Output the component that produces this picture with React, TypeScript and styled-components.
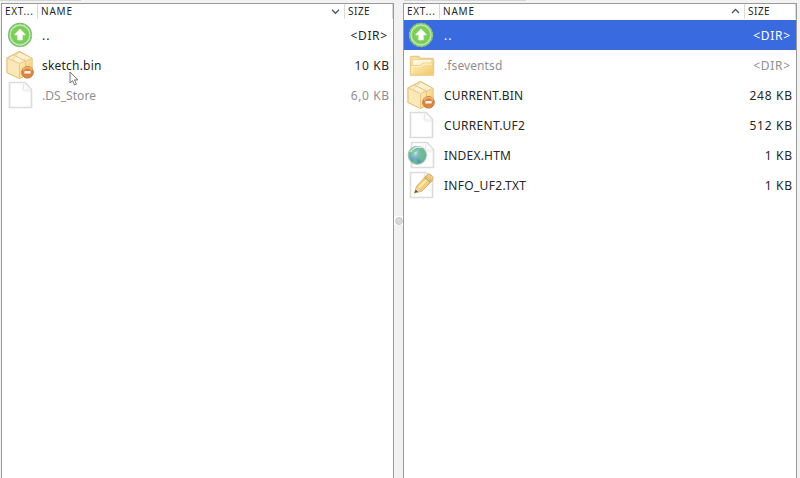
import React from "react";
import styled, { createGlobalStyle } from "styled-components";

const Global = createGlobalStyle`
  * { box-sizing: border-box; }
  body { margin: 0; background: #f2f2f2; overflow: hidden; }
`;

const Window = styled.div`
  position: relative;
  display: grid;
  grid-template-columns: 393px 9px 394px;
  width: 800px;
  height: 478px;
  padding: 3px 0 0 1px;
  background: #f2f2f2;
  font-family: "Noto Sans", "Open Sans", sans-serif;
  color: #262626;
`;

const Pane = styled.section`
  background: #fff;
  border: 1px solid #999;
  border-bottom: 0;
  height: 475px;
`;

const Header = styled.header`
  display: flex;
  height: 16px;
  font-size: 10px;
  line-height: 15px;
`;

const Column = styled.div<{ $width?: number; $pad: number }>`
  display: flex;
  justify-content: space-between;
  align-items: flex-start;
  ${(p) => (p.$width ? `flex: 0 0 ${p.$width}px;` : "flex: 1;")}
  height: 15px;
  padding-left: ${(p) => p.$pad}px;
  border-right: 1px solid #d9d9d9;
  white-space: nowrap;
`;

const Label = styled.span<{ $spacing: number }>`
  letter-spacing: ${(p) => p.$spacing}px;
`;

const SortArrow = styled.svg`
  margin: 4px 4px 0 0;
`;

const Row = styled.div<{ $tone: Tone; $inset: number }>`
  display: flex;
  align-items: center;
  height: 30px;
  padding: 0 4px 0 ${(p) => p.$inset}px;
  font-size: 12px;
  line-height: 32px;
  white-space: pre;
  background: ${(p) => (p.$tone === "selected" ? "#396ae0" : "transparent")};
  color: ${(p) => (p.$tone === "selected" ? "#fff" : p.$tone === "hidden" ? "#8f8f8f" : "#262626")};
`;

const IconCell = styled.div`
  width: 30px;
  height: 30px;
  flex: none;
`;

const Name = styled.span<{ $spacing: number; $indent: number }>`
  flex: 1;
  height: 30px;
  margin-left: ${(p) => p.$indent}px;
  letter-spacing: ${(p) => p.$spacing}px;
`;

const Size = styled.span<{ $spacing: number; $end: number }>`
  height: 30px;
  letter-spacing: ${(p) => p.$spacing}px;
  margin-right: ${(p) => p.$end - p.$spacing}px;
`;

const Splitter = styled.div`
  display: flex;
  align-items: center;
  justify-content: center;
  height: 435px;
`;

const Grip = styled.div`
  width: 9px;
  height: 9px;
  background: #fff;
  display: grid;
  place-items: center;
  &::after {
    content: "";
    width: 6px;
    height: 6px;
    border-radius: 50%;
    background: #d9d9d9;
    border: 1px solid #c9c9c9;
  }
`;

const TopEdge = styled.div<{ $left: number; $width: number }>`
  position: absolute;
  top: 0;
  left: ${(p) => p.$left}px;
  width: ${(p) => p.$width}px;
  height: 1px;
  background: #d6d6d6;
`;

const Cursor = styled.svg`
  position: absolute;
  left: 69px;
  top: 71px;
`;

type Tone = "normal" | "hidden" | "selected";
type Kind = "up" | "box" | "page" | "folder" | "web" | "text";
interface Entry {
  kind: Kind;
  name: string;
  nameSpacing: number;
  size: string;
  sizeSpacing: number;
  tone?: Tone;
}

function PageShape() {
  return (
    <>
      <path d="M4.5 2.5h15.5l6.5 7v18h-22z" fill="#fff" stroke="#dcdcdc" strokeWidth="1.7" strokeLinejoin="round" />
      <path d="M18.5 3.5v6.5H26" fill="#fcfcfc" stroke="#e6e6e6" strokeWidth="1.1" />
      <path d="M15.5 4l3 7 7 1" fill="none" stroke="#f2f2f2" />
    </>
  );
}

function FileIcon({ kind }: { kind: Kind }) {
  return (
    <svg width="30" height="30" viewBox="0 0 30 30">
      <defs>
        <radialGradient id="green"><stop offset="0" stopColor="#8edb66" /><stop offset="1" stopColor="#74cb54" /></radialGradient>
        <linearGradient id="gold" x2="1" y2="1"><stop stopColor="#fdf0c0" /><stop offset="1" stopColor="#f3c765" /></linearGradient>
        <radialGradient id="globe" cx=".4" cy=".35"><stop stopColor="#c4e5ee" /><stop offset=".5" stopColor="#7fb6cf" /><stop offset="1" stopColor="#5a99b0" /></radialGradient>
      </defs>
      {kind === "up" && (
        <>
          <circle cx="15" cy="15" r="11.4" fill="#c9ecb8" stroke="#74b968" strokeWidth="1.5" />
          <circle cx="15" cy="15" r="11.6" fill="none" stroke="#9bcf8e" strokeWidth="1" strokeDasharray="2 2.1" />
          <circle cx="15" cy="15" r="9" fill="url(#green)" stroke="#8dd271" />
          <path d="M15 9l5.5 5.8h-3.2V20h-4.6v-5.2H9.5z" fill="#fff" stroke="#fff" strokeWidth=".5" strokeLinejoin="round" />
        </>
      )}
      {kind === "box" && (
        <>
          <path d="M14.5 1.5l12.5 7v13.5l-12.5 6.5-12.5-6V8z" fill="#f8dea0" stroke="#e4bd77" strokeWidth="1.3" strokeLinejoin="round" />
          <path d="M2.7 8.2l11.8 5.5V28L2.7 22.2z" fill="#fbe8b8" />
          <path d="M14.5 13.7l12.2-5.2v13.3L14.5 28z" fill="url(#gold)" />
          <path d="M14.5 2.5l12 6-12 5-12-5z" fill="#fbf1d3" />
          <path d="M2.7 8.2l11.8 5.5 12.2-5.2M14.5 14v13M8.5 5l12 6v5" fill="none" stroke="#ebc582" strokeWidth="1" />
          <path d="M14.5 2.5L7 9l7.5 5 6-6" fill="none" stroke="#f2d79d" />
          <circle cx="22.5" cy="22.3" r="5.8" fill="#dc8540" stroke="#c07840" />
          <path d="M18 20.3a5 5 0 0 1 9 0" fill="none" stroke="#efb27c" strokeWidth="1.5" />
          <rect x="19.4" y="20.9" width="6.2" height="2.7" rx=".4" fill="#fff6ea" />
        </>
      )}
      {kind === "page" && <PageShape />}
      {kind === "folder" && (
        <>
          <path d="M4.5 25V7.5q0-1 1-1h7l2 2H26.5q1 0 1 1V25z" fill="#f9e4ae" stroke="#ebca87" strokeWidth="1.4" />
          <rect x="6.3" y="9.5" width="19.5" height="8.5" fill="#fff6dc" stroke="#f0d497" />
          <path d="M5 25V15.5h9l3-2.5h10V25z" fill="url(#gold)" stroke="#edcd87" />
          <path d="M6 24v-7.5h8.6l3-2.4H26" fill="none" stroke="#fff4cb" />
        </>
      )}
      {kind === "web" && (
        <>
          <g transform="translate(1 0)"><PageShape /></g>
          <circle cx="11.3" cy="15.3" r="9" fill="url(#globe)" stroke="#9bc8ac" strokeWidth="1.2" />
          <path d="M4 10l4-3.5 4 .5-1 4-3 1.5-1 4-3-2zM12.5 11l4-3 3 4-1 7-3 3-2-3-3-2 1-4zM7.5 19l4 2-1 3-4-2z" fill="#74c28a" opacity=".7" />
          <path d="M4.5 12Q9.5 5 15.5 8" fill="none" stroke="#d6eee5" strokeWidth="1.3" />
        </>
      )}
      {kind === "text" && (
        <>
          <PageShape />
          <path d="M8.5 23l2.3-7L21 5l6 5L16 21z" fill="#f5cd78" stroke="#deb16a" strokeLinejoin="round" />
          <path d="M12.5 18L23.5 7" stroke="#ffe9ad" strokeWidth="2" />
          <path d="M19.8 6.2l2.2-2q1-.8 2.2.2l2.5 2.1q1 1 .1 2.1L25.2 10.7z" fill="#f2cc85" stroke="#d8ae6c" />
          <path d="M18.8 7.5l5.7 4.8" stroke="#b9a77e" strokeWidth="1.2" />
          <path d="M8.5 23l2.3-7 5.2 5z" fill="#efd6ac" stroke="#d3ac76" strokeWidth=".6" />
          <path d="M8.5 23l1.2-3.3 2.4 2.1z" fill="#5c5348" />
        </>
      )}
    </svg>
  );
}

const left: Entry[] = [
  { kind: "up", name: "..", nameSpacing: 1, size: "<DIR>", sizeSpacing: 0.6 },
  { kind: "box", name: "sketch.bin", nameSpacing: 0.2, size: "10 KB", sizeSpacing: 0.6 },
  { kind: "page", name: ".DS_Store", nameSpacing: 0.05, size: "6,0 KB", sizeSpacing: 0.6, tone: "hidden" },
];

const right: Entry[] = [
  { kind: "up", name: "..", nameSpacing: 1, size: "<DIR>", sizeSpacing: 0.7, tone: "selected" },
  { kind: "folder", name: ".fseventsd", nameSpacing: 0.1, size: "<DIR>", sizeSpacing: 0.7, tone: "hidden" },
  { kind: "box", name: "CURRENT.BIN", nameSpacing: 0.2, size: "248 KB", sizeSpacing: 0.7 },
  { kind: "page", name: "CURRENT.UF2", nameSpacing: 0.3, size: "512 KB", sizeSpacing: 0.7 },
  { kind: "web", name: "INDEX.HTM", nameSpacing: 0.2, size: "1 KB", sizeSpacing: 0.7 },
  { kind: "text", name: "INFO_UF2.TXT", nameSpacing: 0.3, size: "1 KB", sizeSpacing: 0.7 },
];

interface PaneProps {
  entries: Entry[];
  ascending?: boolean;
  inset: number;
  indent: number;
  sizeWidth: number;
}

function FilePane({ entries, ascending, inset, indent, sizeWidth }: PaneProps) {
  return (
    <Pane>
      <Header>
        <Column $width={36} $pad={3}><Label $spacing={0.7}>EXT...</Label></Column>
        <Column $pad={3}>
          <Label $spacing={0.8}>NAME</Label>
          <SortArrow width="9" height="7" viewBox="0 0 9 7">
            <path d={ascending ? "M1 5l3.5-3.5L8 5" : "M1 1.8l3.5 3.5L8 1.8"} fill="none" stroke="#555" strokeWidth="1.3" />
          </SortArrow>
        </Column>
        <Column $width={sizeWidth} $pad={3}><Label $spacing={0.5}>SIZE</Label></Column>
      </Header>
      {entries.map((e) => (
        <Row key={e.name} $tone={e.tone ?? "normal"} $inset={inset}>
          <IconCell><FileIcon kind={e.kind} /></IconCell>
          <Name $spacing={e.nameSpacing} $indent={indent}>{e.name}</Name>
          <Size $spacing={e.sizeSpacing} $end={e.size === "<DIR>" ? 2 : 0}>{e.size}</Size>
        </Row>
      ))}
    </Pane>
  );
}

export default function App() {
  return (
    <>
      <Global />
      <Window>
        <TopEdge $left={0} $width={81} />
        <TopEdge $left={404} $width={122} />
        <FilePane entries={left} inset={3} indent={7} sizeWidth={48} />
        <Splitter><Grip /></Splitter>
        <FilePane entries={right} ascending inset={2} indent={8} sizeWidth={51} />
        <Cursor width="10" height="16" viewBox="0 0 10 16">
          <path d="M1 1v11l2.5-2.3L5.5 14l2-.9-2-4.2H9z" fill="#fff" stroke="#666" strokeWidth=".9" />
        </Cursor>
      </Window>
    </>
  );
}
